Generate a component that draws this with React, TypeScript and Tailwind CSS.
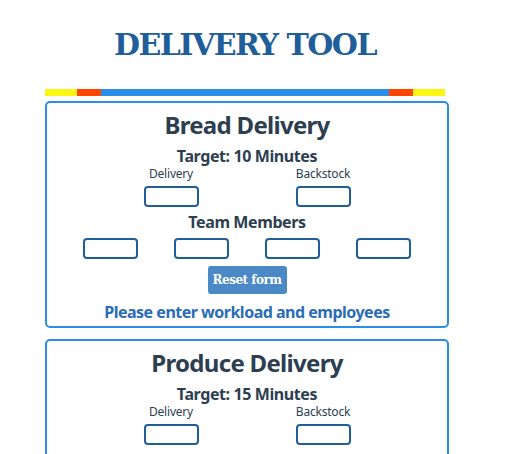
const sans = { fontFamily: '"Noto Sans", "Open Sans", sans-serif' }
const slab = { fontFamily: '"DejaVu Serif", "Liberation Serif", serif' }

function Field({ label }: { label?: string }) {
  return (
    <div className="flex flex-col items-center">
      {label && <span className="text-[12px] leading-[16px] tracking-[-0.2px] text-[#2c3e50]">{label}</span>}
      <input
        className={`${label ? 'mt-[4px]' : ''} h-[21px] w-[55px] rounded-[4px] border-2 border-[#205e99] bg-white outline-none`}
      />
    </div>
  )
}

function DeliveryCard({ title, minutes, full }: { title: string; minutes: number; full?: boolean }) {
  return (
    <div
      className={`flex w-[404px] flex-col items-center rounded-[5px] border-2 border-[#2b8de8] ${full ? 'pb-[4px]' : 'pb-[24px]'}`}
      style={sans}
    >
      <h2 className="mt-[6px] text-[24px] font-bold leading-[32px] tracking-[-0.7px] text-[#2c3e50]">{title}</h2>
      <h3 className="mt-[5px] text-[16px] font-bold leading-[20px] tracking-[-0.4px] text-[#2c3e50]">
        Target: {minutes} Minutes
      </h3>
      <div className="flex gap-[97px]">
        <Field label="Delivery" />
        <Field label="Backstock" />
      </div>
      {full && (
        <>
          <h3 className="mt-[5px] text-[16px] font-bold leading-[20px] tracking-[-0.4px] text-[#2c3e50]">Team Members</h3>
          <div className="mt-[6px] flex gap-[36px]">
            <Field />
            <Field />
            <Field />
            <Field />
          </div>
          <button
            className="mt-[7px] h-[28px] w-[79px] whitespace-nowrap rounded-[3px] bg-[#4a88c6] text-[12px] font-bold tracking-[-0.5px] text-white"
            style={slab}
          >
            Reset form
          </button>
          <p className="mt-[8px] text-[16px] font-bold leading-[20px] tracking-[-0.5px] text-[#2a6cb5]">
            Please enter workload and employees
          </p>
        </>
      )}
    </div>
  )
}

export default function App() {
  return (
    <div className="min-h-screen bg-white">
      <div className="ml-[45px] w-[404px] pt-[25px]">
        <h1
          className="w-[400px] text-center text-[30px] font-bold leading-[40px] tracking-[-1.5px] text-[#205e99]"
          style={slab}
        >
          DELIVERY TOOL
        </h1>
        <div className="mt-[24px] flex h-[7px] w-[400px]">
          <div className="w-[32px] bg-[#fbf514]" />
          <div className="w-[24px] bg-[#ff4500]" />
          <div className="flex-1 bg-[#2a8ee8]" />
          <div className="w-[24px] bg-[#ff4500]" />
          <div className="w-[32px] bg-[#fbf514]" />
        </div>
        <div className="mt-[5px]">
          <DeliveryCard title="Bread Delivery" minutes={10} full />
        </div>
        <div className="mt-[11px]">
          <DeliveryCard title="Produce Delivery" minutes={15} />
        </div>
      </div>
    </div>
  )
}
